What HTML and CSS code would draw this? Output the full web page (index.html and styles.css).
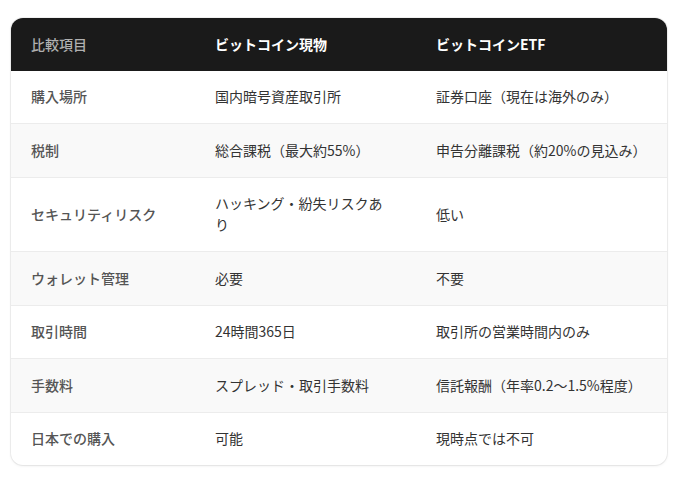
FILE: index.html
```html
<!DOCTYPE html>
<html lang="ja">
<head>
<meta charset="utf-8">
<link rel="stylesheet" href="styles.css">
</head>
<body>
<div class="card">
  <table class="cmp">
    <colgroup>
      <col class="c1"><col class="c2"><col class="c3">
    </colgroup>
    <thead>
      <tr><th class="label">比較項目</th><th>ビットコイン現物</th><th>ビットコインETF</th></tr>
    </thead>
    <tbody>
      <tr><td class="label">購入場所</td><td>国内暗号資産取引所</td><td>証券口座（現在は海外のみ）</td></tr>
      <tr><td class="label">税制</td><td>総合課税（最大約55%）</td><td>申告分離課税（約20%の見込み）</td></tr>
      <tr><td class="label">セキュリティリスク</td><td>ハッキング・紛失リスクあり</td><td>低い</td></tr>
      <tr><td class="label">ウォレット管理</td><td>必要</td><td>不要</td></tr>
      <tr><td class="label">取引時間</td><td>24時間365日</td><td>取引所の営業時間内のみ</td></tr>
      <tr><td class="label">手数料</td><td>スプレッド・取引手数料</td><td>信託報酬（年率0.2〜1.5%程度）</td></tr>
      <tr><td class="label">日本での購入</td><td>可能</td><td>現時点では不可</td></tr>
    </tbody>
  </table>
</div>
</body>
</html>
```

FILE: styles.css
```css
html, body {
  margin: 0;
  background: #ffffff;
}
body {
  padding: 18px 11px;
  font-family: "Noto Sans CJK JP", "Noto Sans", sans-serif;
}
.card {
  width: 656px;
  border-radius: 12px;
  overflow: hidden;
  background: #fff;
  box-shadow: 0 1px 3px rgba(0,0,0,0.08), 0 0 0 1px rgba(0,0,0,0.05);
}
.cmp {
  width: 100%;
  border-collapse: collapse;
  table-layout: fixed;
  font-size: 14px;
  line-height: 21px;
}
.c1 { width: 184px; }
.c2 { width: 221px; }
.c3 { width: 251px; }
.cmp th, .cmp td {
  padding: 15.75px 20px;
  text-align: left;
  vertical-align: middle;
}
.cmp thead th {
  background: #1a1a1a;
  color: #ffffff;
  font-weight: 700;
}
.cmp thead th.label {
  color: #b0b0b0;
  font-weight: 500;
}
.cmp tbody td {
  color: #333333;
  border-top: 1px solid #ececec;
}
.cmp tbody tr:first-child td {
  border-top: none;
}
.cmp tbody tr:nth-child(even) td {
  background: #f9f9f9;
}
.cmp tbody td.label {
  color: #555555;
  font-weight: 500;
}
```
